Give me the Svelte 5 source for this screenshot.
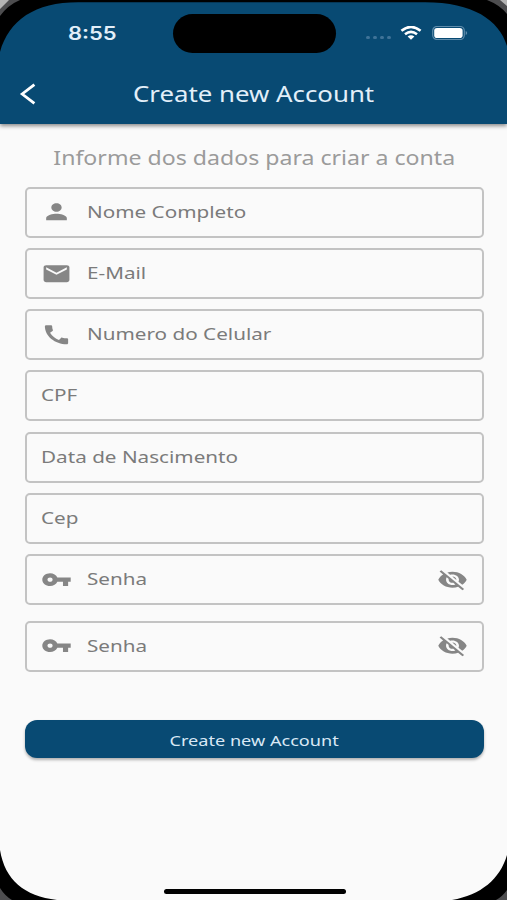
<script>
    let fields = $state([
        { label: "Nome Completo", icon: "person" },
        { label: "E-Mail", icon: "mail" },
        { label: "Numero do Celular", icon: "phone" },
        { label: "CPF" },
        { label: "Data de Nascimento" },
        { label: "Cep" },
        { label: "Senha", icon: "key", secret: true },
        { label: "Senha", icon: "key", secret: true }
    ]);

    const icons = {
        person: "M12 12c2.21 0 4-1.79 4-4s-1.79-4-4-4-4 1.79-4 4 1.79 4 4 4zm0 2c-2.67 0-8 1.34-8 4v2h16v-2c0-2.66-5.33-4-8-4z",
        mail: "M20 4H4c-1.1 0-1.99.9-1.99 2L2 18c0 1.1.9 2 2 2h16c1.1 0 2-.9 2-2V6c0-1.1-.9-2-2-2zm0 4l-8 5-8-5V6l8 5 8-5v2z",
        phone: "M20.01 15.38c-1.23 0-2.42-.2-3.53-.56-.35-.12-.74-.03-1.01.24l-1.57 1.97c-2.83-1.35-5.48-3.9-6.89-6.83l1.95-1.66c.27-.28.35-.67.24-1.02-.37-1.11-.56-2.3-.56-3.53 0-.54-.45-.99-.99-.99H4.19C3.65 3 3 3.24 3 3.99 3 13.28 10.73 21 20.01 21c.71 0 .99-.63.99-1.18v-3.45c0-.54-.45-.99-.99-.99z",
        key: "M12.65 10C11.83 7.67 9.61 6 7 6c-3.31 0-6 2.69-6 6s2.69 6 6 6c2.61 0 4.83-1.67 5.65-4H17v4h4v-4h2v-4H12.65zM7 14c-1.1 0-2-.9-2-2s.9-2 2-2 2 .9 2 2-.9 2-2 2z",
        hidden: "M12 7c2.76 0 5 2.24 5 5 0 .65-.13 1.26-.36 1.83l2.92 2.92c1.51-1.26 2.7-2.89 3.43-4.75-1.73-4.39-6-7.5-11-7.5-1.4 0-2.74.25-3.98.7l2.16 2.16C10.74 7.13 11.35 7 12 7zM2 4.27l2.28 2.28.46.46C3.08 8.3 1.78 10.02 1 12c1.73 4.39 6 7.5 11 7.5 1.55 0 3.03-.3 4.38-.84l.42.42L19.73 22 21 20.73 3.27 3 2 4.27zM7.53 9.8l1.55 1.55c-.05.21-.08.43-.08.65 0 1.66 1.34 3 3 3 .22 0 .44-.03.65-.08l1.55 1.55c-.67.33-1.41.53-2.2.53-2.76 0-5-2.24-5-5 0-.79.2-1.53.53-2.2zm4.31-.78l3.15 3.15.02-.16c0-1.66-1.34-3-3-3l-.17.01z"
    };
</script>

{#snippet icon(name)}
    <svg class="icon" viewBox="0 0 24 24" preserveAspectRatio="none"><path d={icons[name]} /></svg>
{/snippet}

<main>
    <header>
        <div class="status">
            <span class="time">8:55</span>
            <div class="island"></div>
            <div class="signals">
                <div class="dots"><i></i><i></i><i></i><i></i></div>
                <svg class="wifi" viewBox="0 0 22 14" preserveAspectRatio="none">
                    <path d="M1.4 4.8Q11-2.9 20.6 4.8M5 8.3Q11 3.5 17 8.3" />
                    <path class="fill" d="M7.6 10.6Q11 8 14.4 10.6L11 13.7Z" />
                </svg>
                <svg class="battery" viewBox="0 0 36 14">
                    <rect class="shell" x=".7" y=".5" width="31.6" height="13" rx="4.2" />
                    <rect class="level" x="2.2" y="2" width="28.4" height="10" rx="2.8" />
                    <path class="shell-tip" d="M33.7 5q1.5.5 1.5 2t-1.5 2z" />
                </svg>
            </div>
        </div>
        <div class="bar">
            <svg class="back" viewBox="0 0 18 22"><path d="M15.4 1.6 3.2 11l12.2 9.4" /></svg>
            <h1><span>Create new Account</span></h1>
        </div>
    </header>

    <form>
        <p class="intro"><span>Informe dos dados para criar a conta</span></p>
        {#each fields as field}
            <div class="field" class:secret={field.secret}>
                {#if field.icon}
                    {@render icon(field.icon)}
                {/if}
                <span class="label">{field.label}</span>
                {#if field.secret}
                    {@render icon("hidden")}
                {/if}
            </div>
        {/each}
        <button type="button"><span>Create new Account</span></button>
    </form>

    <div class="home"></div>

    <svg class="bezel" viewBox="0 0 507 900">
        <path d="M0 0H507V46C499 20 473 2.3 425 2.3H78C35 2.3 9 20 0 52Z" />
        <path d="M0 850C5 880 24 896 57 900H0ZM507 855C500 879 481 895 452 900H507Z" />
        <path class="edge" d="M0 0H20Q8 5 0 16ZM507 0H487Q500 5 507 14ZM0 888Q5 896 12 900H0ZM507 890Q502 897 496 900H507Z" />
        <path class="shine" d="M0 0H9L0 9ZM507 0H500L507 6Z" />
    </svg>
</main>

<style>
:global(body) {
    margin: 0;
    background-color: #fafafa;
}

main {
    position: relative;
    box-sizing: border-box;
    width: 507px;
    height: 900px;
    overflow: hidden;
    display: flex;
    flex-direction: column;
    background-color: #fafafa;
    font-family: "Noto Sans", "Open Sans", sans-serif;
}

header {
    height: 123.5px;
    flex: none;
    background-color: #084a73;
    box-shadow: 0 2px 4px rgba(0, 0, 0, 0.45);
    color: #e2eff9;
}

.status {
    display: grid;
    grid-template-columns: 173px 163px 1fr;
    height: 66px;
    align-items: start;
}

.time {
    font-family: Inter, sans-serif;
    font-size: 18px;
    line-height: 22px;
    font-weight: 600;
    margin: 23px 0 0 68px;
    transform: scaleX(1.22);
    transform-origin: left;
    justify-self: start;
}

.island {
    margin-top: 14px;
    height: 38.5px;
    border-radius: 20px;
    background-color: #000;
}

.signals {
    display: flex;
    margin: 26px 0 0 29px;
}

.dots {
    display: flex;
    gap: 3px;
    margin: 10px 9px 0 1px;
}

.dots i {
    width: 4px;
    height: 3.4px;
    border-radius: 2px;
    background-color: #3f7398;
}

.wifi {
    width: 22px;
    height: 14px;
    margin-right: 9.5px;
    fill: none;
    stroke: #fff;
    stroke-width: 2.6;
}

.wifi .fill {
    fill: #fff;
    stroke: none;
}

.battery {
    width: 36px;
    height: 14px;
}

.shell {
    fill: none;
    stroke: #5f8cab;
    stroke-width: 1.2;
}

.shell-tip {
    fill: #5f8cab;
}

.level {
    fill: #fff;
}

.bar {
    display: flex;
    align-items: center;
    height: 56px;
}

.back {
    width: 18px;
    height: 22px;
    margin-left: 19px;
    fill: none;
    stroke: #fff;
    stroke-width: 2.8;
}

h1 {
    flex: 1;
    margin: 0 36px 0 0;
    text-align: center;
    font-size: 21.1px;
    line-height: 28px;
    font-weight: 400;
    white-space: nowrap;
}

h1 span,
.intro span,
button span {
    display: inline-block;
    transform: scaleX(1.224);
}

form {
    display: flex;
    flex-direction: column;
    gap: 10.25px;
    padding: 20px 23px 0 25px;
}

.intro {
    margin: 0 0 5.75px;
    padding-top: 1px;
    height: 26px;
    text-align: center;
    font-size: 19px;
    line-height: 27px;
    color: #9b9b9b;
    white-space: nowrap;
}

.intro span {
    transform: scaleX(1.216);
}

.field {
    display: flex;
    align-items: center;
    box-sizing: border-box;
    height: 51px;
    padding: 0 14px 0 13.5px;
    border: 2px solid #c3c3c3;
    border-radius: 5px;
    color: #7b7b7b;
}

.secret + .secret {
    margin-top: 5.25px;
}

.icon {
    width: 31px;
    height: 25.4px;
    flex: none;
    fill: #868686;
}

.label {
    flex: 1;
    padding-bottom: 1px;
    font-size: 16.9px;
    line-height: 24px;
    transform: scaleX(1.224);
    transform-origin: left;
}

.icon + .label {
    margin-left: 15.7px;
}

button {
    height: 38px;
    margin-top: 38.5px;
    padding: 1px 0 0;
    border: 0;
    border-radius: 12px;
    background-color: #084a73;
    box-shadow: 0 2px 3px rgba(0, 0, 0, 0.3);
    color: #d9e8f5;
    font: 14.8px/20px "Noto Sans", "Open Sans", sans-serif;
}

.home {
    width: 182px;
    height: 5.5px;
    margin: auto 161px 6px 164px;
    border-radius: 3px;
    background-color: #000;
}

.bezel {
    position: absolute;
    inset: 0;
    pointer-events: none;
}

.edge {
    fill: #4d4d4f;
}

.shine {
    fill: #b5b5b5;
}
</style>
